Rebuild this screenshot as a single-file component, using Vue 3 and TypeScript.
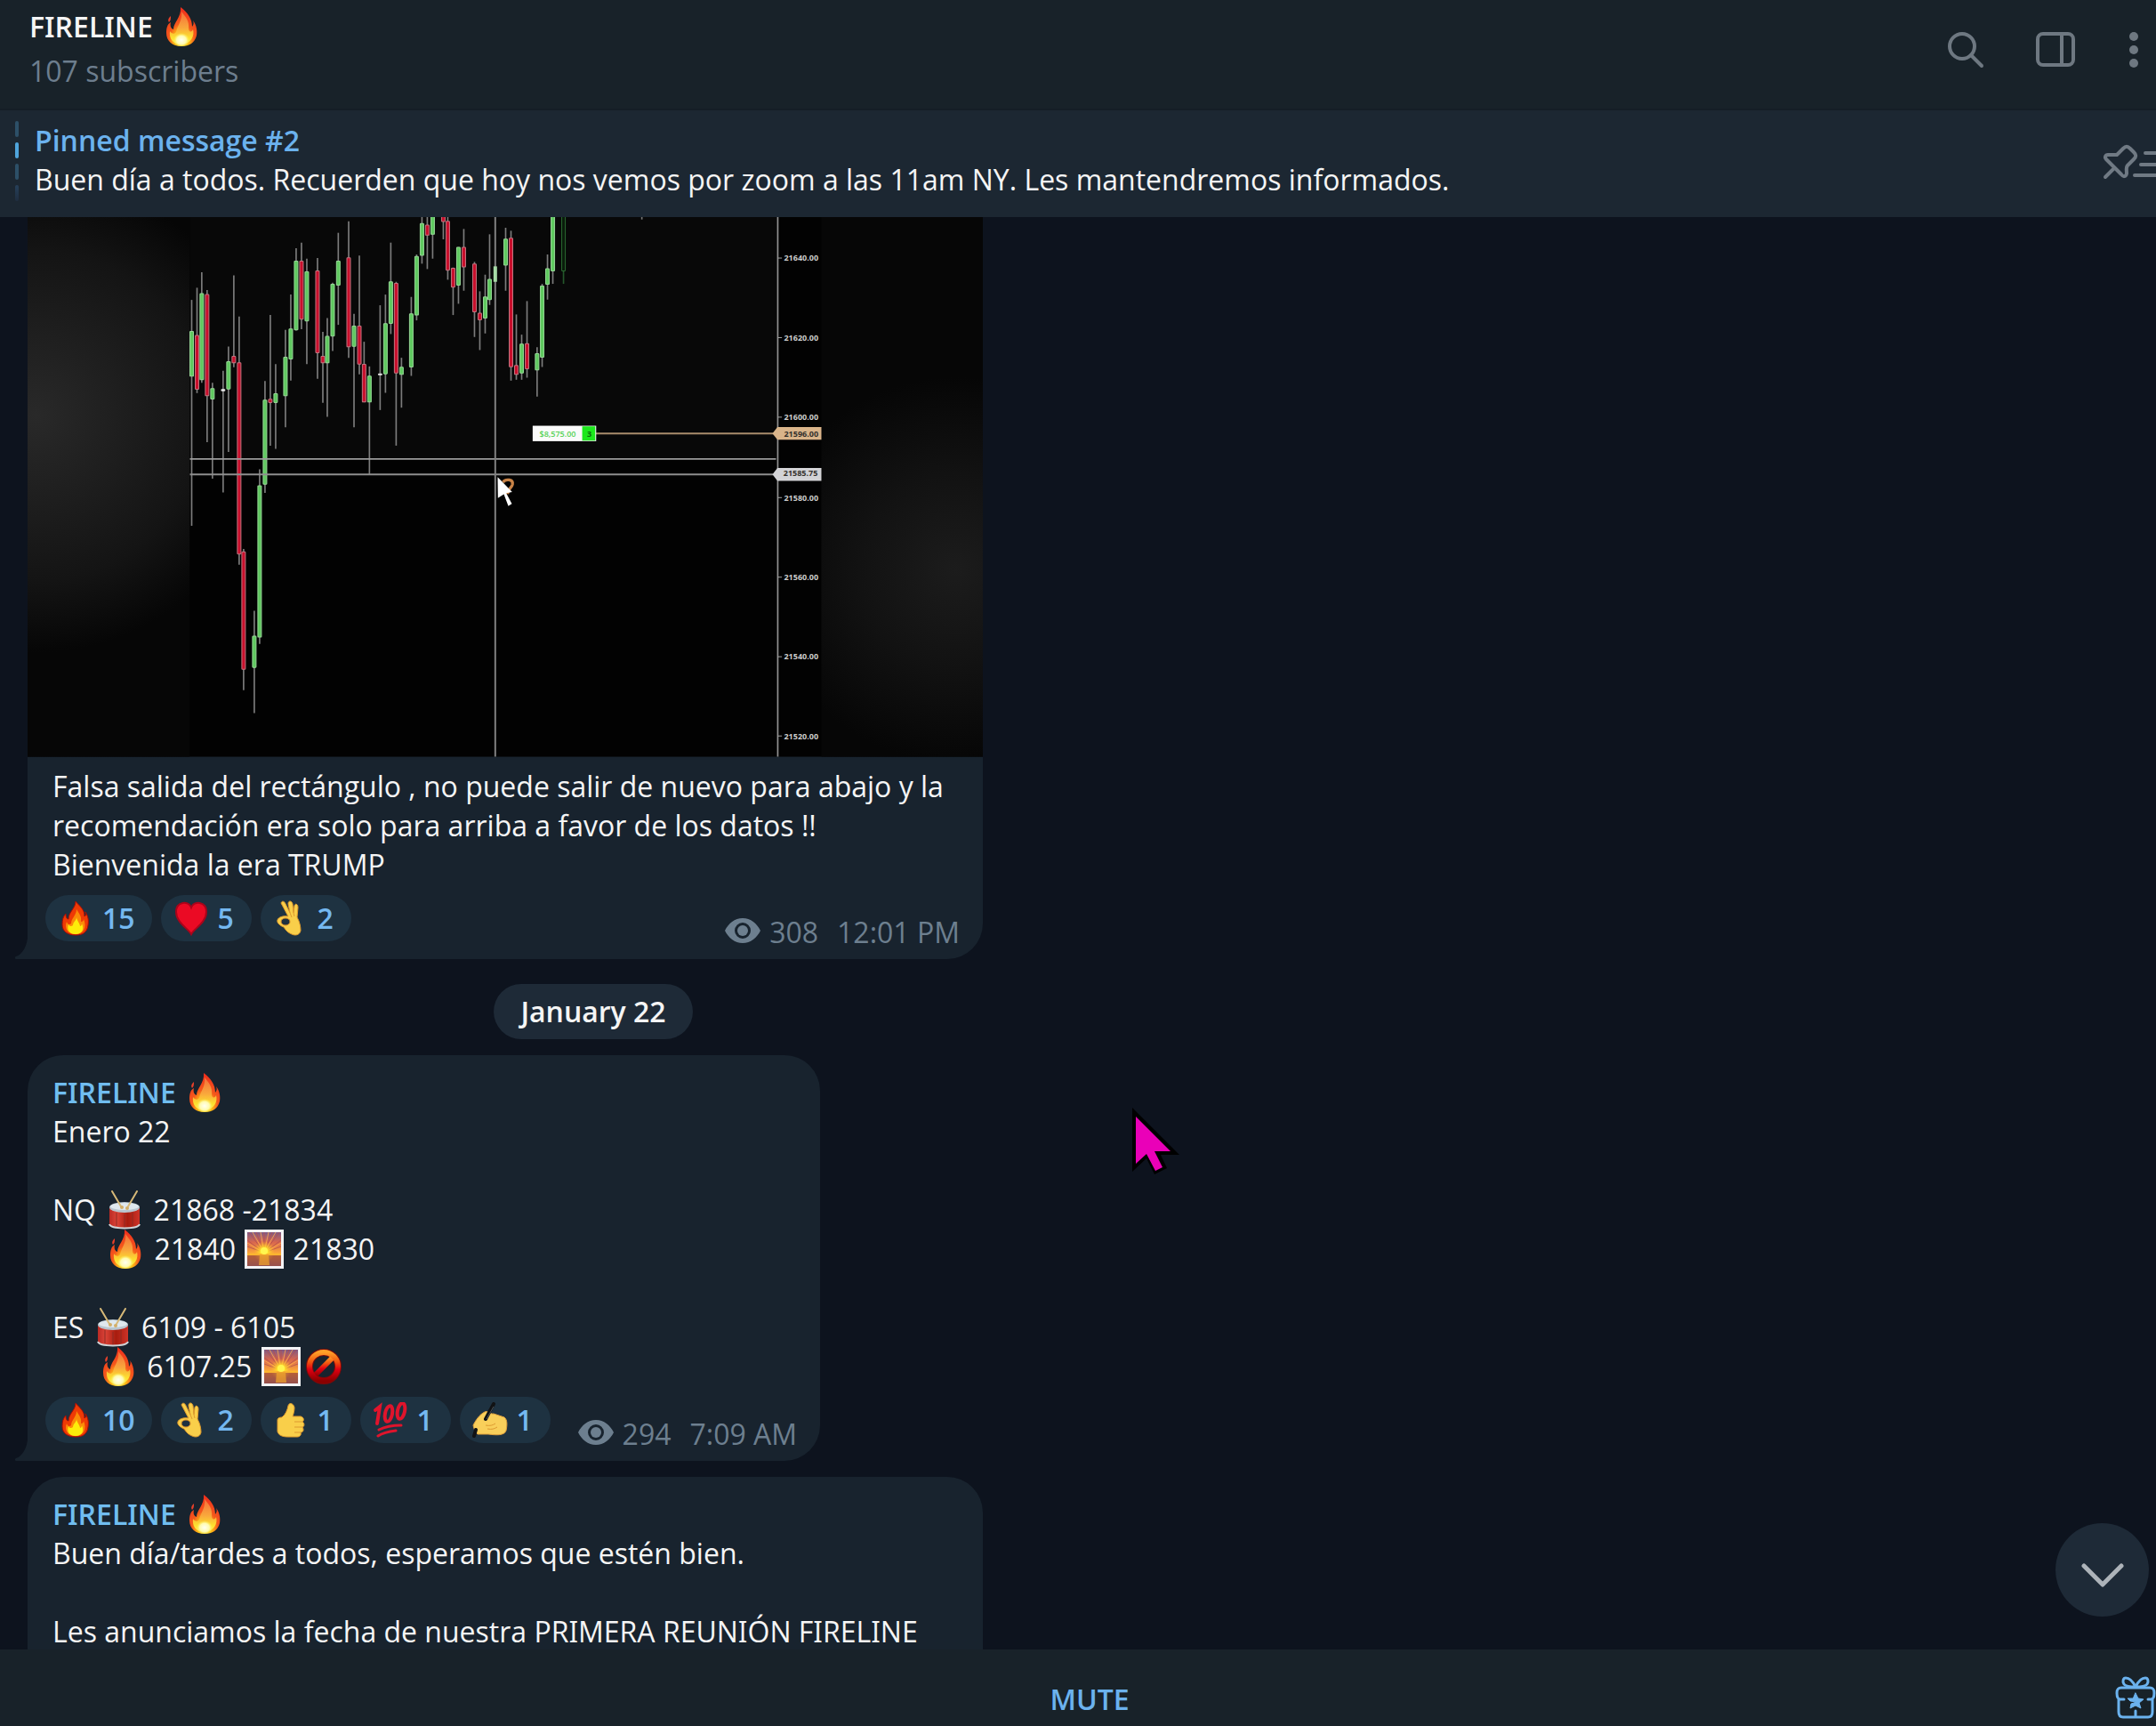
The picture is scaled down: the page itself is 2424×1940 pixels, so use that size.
<script setup lang="ts">
interface Reaction {
  emoji: string
  count: number
}
type Piece = { text?: string; emoji?: string }
type Candle = [x: number, high: number, low: number, top: number, bottom: number, kind: string]

const emojiPattern = /:(\w+):/

function pieces(line: string): Piece[] {
  return line
    .split(emojiPattern)
    .map((part, i) => (i % 2 ? { emoji: part } : { text: part }))
    .filter((p) => p.emoji || p.text)
}

const caption =
  'Falsa salida del rectángulo , no puede salir de nuevo para abajo y la recomendación era solo para arriba a favor de los datos !!\nBienvenida la era TRUMP'

const levels: string[] = [
  'Enero 22',
  '',
  'NQ :drum: 21868 -21834',
  '       :fire: 21840 :sunrise: 21830',
  '',
  'ES :drum: 6109 - 6105',
  '      :fire: 6107.25 :sunrise::ban:',
]

const announcement: string[] = [
  'Buen día/tardes a todos, esperamos que estén bien.',
  '',
  'Les anunciamos la fecha de nuestra PRIMERA REUNIÓN FIRELINE',
]

const firstReactions: Reaction[] = [
  { emoji: 'flame', count: 15 },
  { emoji: 'heart', count: 5 },
  { emoji: 'ok', count: 2 },
]
const secondReactions: Reaction[] = [
  { emoji: 'flame', count: 10 },
  { emoji: 'ok', count: 2 },
  { emoji: 'thumb', count: 1 },
  { emoji: 'hundred', count: 1 },
  { emoji: 'writing', count: 1 },
]

const candles: Candle[] = [
  [46, 291, 1052, 397, 548, 'up'],
  [64, 250, 605, 411, 592, 'down'],
  [80, 198, 570, 270, 560, 'up'],
  [98, 258, 770, 273, 614, 'down'],
  [116, 570, 893, 590, 625, 'up'],
  [152, 530, 940, 593, 597, 'flat'],
  [170, 448, 803, 499, 591, 'up'],
  [188, 208, 518, 481, 503, 'down'],
  [206, 347, 1183, 503, 1147, 'down'],
  [221, 1130, 1606, 1140, 1535, 'down'],
  [257, 1338, 1683, 1424, 1529, 'up'],
  [275, 862, 1450, 917, 1427, 'up'],
  [293, 564, 941, 629, 912, 'up'],
  [311, 342, 782, 626, 637, 'down'],
  [329, 507, 793, 607, 637, 'up'],
  [362, 392, 720, 484, 614, 'up'],
  [380, 273, 563, 389, 490, 'up'],
  [398, 117, 394, 160, 392, 'up'],
  [416, 98, 390, 160, 356, 'down'],
  [434, 152, 507, 196, 362, 'up'],
  [470, 150, 557, 193, 469, 'down'],
  [488, 399, 638, 481, 503, 'down'],
  [503, 352, 685, 414, 503, 'up'],
  [521, 233, 463, 238, 413, 'up'],
  [540, 65, 375, 160, 241, 'up'],
  [575, 26, 486, 149, 449, 'down'],
  [593, 338, 720, 379, 447, 'up'],
  [611, 142, 542, 379, 507, 'down'],
  [627, 432, 636, 508, 635, 'down'],
  [645, 515, 878, 548, 635, 'up'],
  [681, 309, 662, 540, 543, 'flat'],
  [699, 273, 604, 371, 540, 'up'],
  [717, 98, 406, 230, 370, 'up'],
  [735, 230, 782, 235, 537, 'down'],
  [753, 486, 654, 518, 542, 'up'],
  [786, 281, 547, 338, 517, 'up'],
  [804, 138, 360, 145, 342, 'up'],
  [822, 0, 169, 34, 141, 'up'],
  [840, 0, 187, 39, 73, 'down'],
  [858, 0, 152, 0, 70, 'up'],
  [894, 0, 87, 0, 27, 'down'],
  [909, 0, 223, 26, 191, 'down'],
  [927, 182, 342, 184, 248, 'down'],
  [945, 113, 304, 114, 241, 'up'],
  [963, 52, 260, 114, 180, 'down'],
  [999, 163, 416, 170, 331, 'down'],
  [1017, 262, 460, 336, 358, 'down'],
  [1035, 206, 404, 281, 352, 'up'],
  [1050, 70, 308, 222, 290, 'up'],
  [1104, 48, 260, 86, 174, 'up'],
  [1122, 58, 563, 83, 516, 'down'],
  [1140, 340, 560, 512, 542, 'down'],
  [1158, 408, 560, 440, 537, 'up'],
  [1176, 295, 553, 438, 523, 'down'],
  [1210, 450, 617, 472, 527, 'up'],
  [1227, 237, 517, 244, 484, 'up'],
  [1245, 138, 290, 186, 238, 'up'],
  [1263, 0, 237, 0, 193, 'up'],
  [1299, 0, 237, 0, 193, 'live'],
]

const ticks: { y: number; label: string }[] = [
  { y: 150, label: '21640.00' },
  { y: 418, label: '21620.00' },
  { y: 686, label: '21600.00' },
  { y: 957, label: '21580.00' },
  { y: 1225, label: '21560.00' },
  { y: 1493, label: '21540.00' },
  { y: 1760, label: '21520.00' },
]
</script>

<template>
  <div class="app">
    <svg class="defs" width="0" height="0" aria-hidden="true">
      <defs>
        <radialGradient id="fireOuter" cx="0.5" cy="0.85" r="0.85">
          <stop offset="0" stop-color="#fdf21a" />
          <stop offset="0.3" stop-color="#fdb515" />
          <stop offset="0.5" stop-color="#f4591c" />
          <stop offset="1" stop-color="#ee2a1c" />
        </radialGradient>
        <linearGradient id="fireMid" x1="0" y1="0" x2="0" y2="1">
          <stop offset="0" stop-color="#f46e3a" />
          <stop offset="0.5" stop-color="#f9a83c" />
          <stop offset="0.8" stop-color="#fde12f" />
          <stop offset="1" stop-color="#fdf05a" />
        </linearGradient>
        <radialGradient id="fireCore">
          <stop offset="0" stop-color="#fffff0" />
          <stop offset="0.6" stop-color="#fffbb0" />
          <stop offset="1" stop-color="#fdf05a" stop-opacity="0" />
        </radialGradient>
        <linearGradient id="drumSide">
          <stop offset="0" stop-color="#b92a24" />
          <stop offset="0.25" stop-color="#dc4438" />
          <stop offset="0.6" stop-color="#a81c0e" />
          <stop offset="1" stop-color="#cc3328" />
        </linearGradient>
        <linearGradient id="sky" x1="0" y1="0" x2="0" y2="1">
          <stop offset="0" stop-color="#7d5a86" />
          <stop offset="0.3" stop-color="#d9674e" />
          <stop offset="0.6" stop-color="#f9a23a" />
          <stop offset="0.66" stop-color="#fbc02f" />
          <stop offset="0.7" stop-color="#c5702f" />
          <stop offset="1" stop-color="#7c5264" />
        </linearGradient>
        <radialGradient id="sunGlow">
          <stop offset="0" stop-color="#ffff70" />
          <stop offset="0.35" stop-color="#ffe02a" />
          <stop offset="1" stop-color="#ffb030" stop-opacity="0" />
        </radialGradient>
        <linearGradient id="banRing" x1="0" y1="0" x2="0" y2="1">
          <stop offset="0" stop-color="#ffa028" />
          <stop offset="0.35" stop-color="#f0500f" />
          <stop offset="0.6" stop-color="#e00012" />
          <stop offset="1" stop-color="#8a0000" />
        </linearGradient>
        <radialGradient id="blurLeft" cx="-480" cy="680" r="800" gradientUnits="userSpaceOnUse">
          <stop offset="0" stop-color="#292929" />
          <stop offset="0.3" stop-color="#202020" />
          <stop offset="0.7" stop-color="#141414" />
          <stop offset="1" stop-color="#060606" />
        </radialGradient>
        <radialGradient id="blurRight" cx="2620" cy="1200" r="650" gradientUnits="userSpaceOnUse">
          <stop offset="0" stop-color="#1c1c1c" />
          <stop offset="0.5" stop-color="#121212" />
          <stop offset="1" stop-color="#060606" />
        </radialGradient>
      </defs>

      <symbol id="fire" viewBox="0 0 44 44">
        <path fill="url(#fireOuter)" d="M21 0C29 6 34 13 34 22C36 20 36 17 35 15C39 20 40 27 39 32C37 40 31 44 22 44C12 44 5 38 5 29C5 24 6 19 10 17C9 21 10 24 13 25C13 17 22 12 21 0Z" />
        <path fill="#e8402a" d="M10 10C8 12 6 14 8 17C10 15 10 13 10 10Z" />
        <path fill="url(#fireMid)" d="M22 5C27 11 31 16 30 24C30 28 33 29 35 25C37 32 33 41 22 42C12 42 8 35 9 27C11 30 14 31 16 28C18 19 23 16 22 5Z" />
        <ellipse cx="22" cy="37" rx="9" ry="8" fill="url(#fireCore)" />
      </symbol>

      <symbol id="drum" viewBox="0 0 44 44">
        <path fill="url(#drumSide)" d="M5 20V38C6 44 38 44 39 38V20Z" />
        <path d="M13 25V40M31 25V40M22 27V42" stroke="#8c2a22" stroke-width="1" />
        <path d="M5 38C7 44 37 44 39 38" fill="none" stroke="#cfd3d6" stroke-width="2" />
        <ellipse cx="22" cy="19" rx="17" ry="6" fill="#b9c6cf" />
        <ellipse cx="22" cy="18" rx="16" ry="4" fill="#dfe8ee" />
        <path d="M8 1L18 18M36 1L26 18" stroke="#d7b978" stroke-width="2" stroke-linecap="round" />
        <circle cx="19" cy="19" r="2" fill="#d2ae68" />
        <circle cx="25" cy="20" r="2" fill="#d2ae68" />
      </symbol>

      <symbol id="sunrise" viewBox="0 0 44 44">
        <rect x="0" y="0" width="44" height="44" fill="#f4f4f6" />
        <rect x="3" y="3" width="38" height="38" fill="url(#sky)" />
        <path d="M22 26L5 3M22 26L13 3M22 26L22 3M22 26L31 3M22 26L39 3M22 26L3 12M22 26L41 12M22 26L3 19M22 26L41 19" stroke="#b4504f" stroke-width="1" opacity="0.8" />
        <path d="M22 26L9 3M22 26L18 3M22 26L27 3M22 26L35 3M22 26L3 15M22 26L41 15" stroke="#ffad50" stroke-width="1" opacity="0.8" />
        <circle cx="22" cy="25" r="12" fill="url(#sunGlow)" />
        <path d="M3 28H41V41H3Z" fill="#a8513f" opacity="0.6" />
        <path d="M3 28H41" stroke="#fbb52f" stroke-width="2" />
        <path d="M17 28H27L28 40H16Z" fill="#eda02c" opacity="0.75" />
        <circle cx="22" cy="24" r="4" fill="#fff64f" />
      </symbol>

      <symbol id="ban" viewBox="0 0 44 44">
        <circle cx="22" cy="22" r="16" fill="none" stroke="#7a0a0a" stroke-width="8" />
        <path d="M33 11L11 33" stroke="url(#banRing)" stroke-width="6" />
        <circle cx="22" cy="22" r="16" fill="none" stroke="url(#banRing)" stroke-width="6" />
      </symbol>

      <symbol id="flame" viewBox="0 0 40 40">
        <path fill="#ee3a05" stroke="#a80d05" stroke-width="1" d="M20 1C25 7 30 10 30 18C32 17 32 15 31 13C34 18 35 22 34 28C33 36 28 39 20 39C11 39 5 35 5 27C5 22 6 18 9 15C9 19 10 21 12 21C12 13 20 9 20 1Z" />
        <path fill="#fb8a08" d="M21 10C24 15 27 18 26 24C28 24 29 23 29 21C33 30 29 38 20 38C11 38 7 31 10 24C11 27 13 28 15 26C15 20 21 17 21 10Z" />
        <path fill="#fdec0a" d="M21 19C22 24 25 26 25 29C26 29 27 28 27 26C30 33 27 38 20 38C12 38 10 32 12 27C13 29 15 30 17 28C17 24 21 23 21 19Z" />
      </symbol>

      <symbol id="heart" viewBox="0 0 40 40">
        <path fill="#eb0a24" stroke="#a9041a" stroke-width="2" d="M20 38C17 32 3 25 3 13C3 1 17 0 20 8C23 0 37 1 37 13C37 25 23 32 20 38Z" />
      </symbol>

      <symbol id="ok" viewBox="0 0 40 40">
        <path fill="#f9cf4a" stroke="#e09a2c" stroke-width="1" d="M9 3C10 0 13 1 14 4L19 14L17 4C17 0 21 0 22 4L23 14L24 6C25 3 28 4 28 8L27 19C30 24 31 30 31 34C30 39 25 40 21 38C16 36 14 33 12 30C7 28 4 25 5 22C6 19 11 17 17 18Z" />
        <ellipse cx="14" cy="24" rx="5" ry="4" fill="#1f3140" stroke="#d88c28" stroke-width="1" />
        <path d="M19 14L21 19M23 14L24 18" stroke="#dd9a30" fill="none" />
      </symbol>

      <symbol id="thumb" viewBox="0 0 40 40">
        <path fill="#f9cf4a" stroke="#e09a2c" stroke-width="1" d="M5 20C5 18 7 17 10 17C14 14 16 9 17 4C18 0 23 1 24 6C24 10 23 13 22 16H31C35 17 35 21 33 22C36 24 35 28 33 28C35 31 34 34 31 34C32 37 30 39 27 39H17C10 39 6 37 5 33Z" />
        <path d="M24 22H33M24 28H33M24 34H31" stroke="#dd9a30" fill="none" />
      </symbol>

      <symbol id="hundred" viewBox="0 0 40 40">
        <g fill="none" stroke="#e0142c" stroke-linecap="round">
          <path stroke-width="4" d="M3 9L8 5L5 24" />
          <ellipse cx="18" cy="13" rx="4" ry="9" transform="rotate(12 18 13)" stroke-width="4" />
          <ellipse cx="32" cy="10" rx="4" ry="9" transform="rotate(12 32 10)" stroke-width="4" />
          <path stroke-width="3" d="M7 31C15 27 24 26 32 26M6 38C12 34 18 33 26 32" />
        </g>
      </symbol>

      <symbol id="writing" viewBox="0 0 40 40">
        <path fill="#f9cf5a" stroke="#e0a03c" stroke-width="1" d="M1 26C4 20 8 14 14 11C18 9 21 14 24 13L36 17C40 20 39 27 38 32C36 38 26 37 18 36L6 36C3 34 2 30 1 26Z" />
        <path d="M15 26C20 27 23 26 26 24M17 30C22 31 25 30 28 28" stroke="#dd9a30" fill="none" />
        <path d="M24 2L15 19M4 31L2 38" stroke="#111214" stroke-width="4" stroke-linecap="round" fill="none" />
        <path d="M24 5L16 19" stroke="#4c5157" stroke-width="1" />
      </symbol>

      <symbol id="eye" viewBox="0 0 40 28">
        <path fill="currentColor" fill-rule="evenodd" d="M20 0C29 0 36 6 40 14C36 22 29 28 20 28C11 28 4 22 0 14C4 6 11 0 20 0ZM20 5A9 9 0 1 0 20 23A9 9 0 1 0 20 5Z" />
        <circle cx="20" cy="14" r="6" fill="currentColor" />
      </symbol>

      <symbol id="tail" viewBox="0 0 14 24">
        <path fill="currentColor" d="M14 0C13 10 8 19 1 21C-1 22 0 24 1 24H14Z" />
      </symbol>
    </svg>

    <header class="top">
      <div class="peer">
        <h1 class="title">FIRELINE <svg class="emoji"><use href="#fire" /></svg></h1>
        <p class="status">107 subscribers</p>
      </div>
      <nav class="tools">
        <button type="button" aria-label="Search">
          <svg width="42" height="42" viewBox="0 0 42 42" fill="none" stroke="currentColor" stroke-width="4" stroke-linecap="round">
            <circle cx="17" cy="17" r="14" /><path d="M27 27L39 39" />
          </svg>
        </button>
        <button type="button" aria-label="Channel info">
          <svg width="44" height="42" viewBox="0 0 44 42" fill="none" stroke="currentColor" stroke-width="4">
            <rect x="2" y="3" width="40" height="35" rx="6" /><path d="M29 3V38" />
          </svg>
        </button>
        <button type="button" aria-label="More">
          <svg width="10" height="42" viewBox="0 0 10 42" fill="currentColor">
            <circle cx="5" cy="6" r="5" /><circle cx="5" cy="21" r="5" /><circle cx="5" cy="36" r="5" />
          </svg>
        </button>
      </nav>
    </header>

    <section class="pinned">
      <div class="marks"><i /><i class="on" /><i /><i class="dim" /></div>
      <div class="pinned-body">
        <h2>Pinned message #2</h2>
        <p>Buen día a todos. Recuerden que hoy nos vemos por zoom a las 11am NY. Les mantendremos informados.</p>
      </div>
      <button type="button" class="pin" aria-label="Pinned messages">
        <svg width="72" height="40" viewBox="0 0 72 40" fill="none" stroke="currentColor" stroke-width="4" stroke-linecap="round" stroke-linejoin="round">
          <path d="M3 37L13 27M16 12L23 5C26 2 28 2 31 5L35 9C38 12 38 14 35 17L28 24C26 26 27 29 27 33C26 37 23 37 21 34L4 17C2 15 3 12 6 12Z" />
          <path d="M48 10H70M43 23H70M36 35H70" />
        </svg>
      </button>
    </section>

    <main class="history">
      <div class="column">
        <article class="bubble wide photo">
          <svg class="chart" viewBox="-507 12 3219 1818" role="img" aria-label="Price chart">
            <rect x="-507" y="12" width="3219" height="1818" fill="#020202" />
            <rect x="-507" y="12" width="546" height="1818" fill="url(#blurLeft)" />
            <rect x="2168" y="12" width="544" height="1818" fill="url(#blurRight)" />
            <rect x="39" y="12" width="1982" height="815" fill="#080808" />
            <g v-for="c in candles" :key="c[0]" :class="['candle', c[5]]">
              <path :d="`M${c[0]} ${c[1]}V${c[2]}`" />
              <rect :x="c[0] - 6" :y="c[3]" width="12" :height="c[4] - c[3]" rx="2" />
            </g>
            <path d="M1563 12V20" stroke="#777" stroke-width="5" />
            <path d="M40 827H2015" stroke="#9b9b9b" stroke-width="5" />
            <path d="M40 879H2005" stroke="#8e8e8e" stroke-width="6" />
            <path d="M1069 12V1830" stroke="#808080" stroke-width="6" />
            <rect x="1063" y="178" width="12" height="52" fill="#a6dba6" />
            <path d="M2021 12V1830" stroke="#929292" stroke-width="5" />
            <g v-for="t in ticks" :key="t.y">
              <path :d="`M2021 ${t.y}h14`" stroke="#a0a0a0" stroke-width="3" />
              <text x="2042" :y="t.y + 10" class="axis">{{ t.label }}</text>
            </g>
            <path d="M1408 741H2010" stroke="#a98d6c" stroke-width="6" />
            <rect x="1195" y="715" width="214" height="52" fill="#fafafa" />
            <rect x="1362" y="717" width="44" height="48" fill="#1ce81c" />
            <text x="1218" y="751" class="axis profit">$8,575.00</text>
            <text x="1378" y="751" class="axis qty">3</text>
            <path d="M2003 741L2020 719H2168V762H2020Z" fill="#d9b48a" />
            <path d="M2003 879L2020 857H2168V901H2020Z" fill="#d3d3d6" />
            <text x="2042" y="751" class="axis dark">21596.00</text>
            <text x="2040" y="885" class="axis dark">21585.75</text>
            <path d="M1095 905C1105 892 1130 896 1127 912C1124 926 1112 925 1110 945" fill="none" stroke="#c98347" stroke-width="10" />
            <path d="M1077 888L1126 938L1106 942L1125 978L1113 985L1098 946L1078 958Z" fill="#fff" />
          </svg>
          <p class="text">{{ caption }}</p>
          <footer class="info">
            <div class="reactions">
              <button v-for="r in firstReactions" :key="r.emoji" type="button" class="reaction">
                <svg><use :href="'#' + r.emoji" /></svg><span>{{ r.count }}</span>
              </button>
            </div>
            <div class="meta">
              <svg><use href="#eye" /></svg><span>308</span><time>12:01 PM</time>
            </div>
          </footer>
          <svg class="tail"><use href="#tail" /></svg>
        </article>

        <div class="date">January 22</div>

        <article class="bubble">
          <h3 class="name">FIRELINE <svg class="emoji"><use href="#fire" /></svg></h3>
          <p v-for="(line, i) in levels" :key="i" class="text"><template v-for="(p, j) in pieces(line)" :key="j"><svg v-if="p.emoji" class="emoji"><use :href="'#' + p.emoji" /></svg><template v-else>{{ p.text }}</template></template></p>
          <footer class="info">
            <div class="reactions">
              <button v-for="r in secondReactions" :key="r.emoji" type="button" class="reaction">
                <svg><use :href="'#' + r.emoji" /></svg><span>{{ r.count }}</span>
              </button>
            </div>
            <div class="meta">
              <svg><use href="#eye" /></svg><span>294</span><time>7:09 AM</time>
            </div>
          </footer>
          <svg class="tail"><use href="#tail" /></svg>
        </article>

        <article class="bubble wide long">
          <h3 class="name">FIRELINE <svg class="emoji"><use href="#fire" /></svg></h3>
          <p v-for="(line, i) in announcement" :key="i" class="text">{{ line }}</p>
        </article>
      </div>

      <button type="button" class="jump" aria-label="Scroll to bottom">
        <svg width="48" height="28" viewBox="0 0 48 28" fill="none" stroke="currentColor" stroke-width="5" stroke-linecap="round" stroke-linejoin="round">
          <path d="M3 4L24 25L45 4" />
        </svg>
      </button>
    </main>

    <div class="bottom">
      <button type="button" class="mute">MUTE</button>
      <button type="button" class="gift" aria-label="Send a gift">
        <svg width="46" height="48" viewBox="0 0 46 48" fill="none" stroke="currentColor" stroke-width="3" stroke-linecap="round" stroke-linejoin="round">
          <path d="M10 26H6C3 26 2 23 2 19C2 15 3 13 7 13H39C43 13 44 15 44 19C44 23 43 26 40 26H37M4 26V40C4 44 6 46 9 46H37C40 46 42 44 42 40V26M23 39V46" />
          <path d="M23 12C21 8 17 2 12 2C9 2 8 6 10 9C12 12 18 12 23 12C28 12 34 12 36 9C38 6 37 2 34 2C29 2 25 8 23 12" />
          <path fill="currentColor" stroke-width="1" d="M23 19L26 25L32 26L27 30L29 36L23 33L17 36L18 31L24 29L17 28L14 25L20 25Z" />
        </svg>
      </button>
    </div>

    <svg class="cursor" width="56" height="76" viewBox="0 0 56 76" aria-hidden="true">
      <path fill="#000" d="M0 0L53 53H32L39 68L25 75L16 57L0 72Z" />
      <path fill="#ea00b8" d="M4 10L43 49H25L34 67L26 71L16 52L4 63Z" />
    </svg>
  </div>
</template>

<style>
body {
  background: #0d131e;
}
</style>

<style scoped>
.app {
  position: relative;
  display: flex;
  flex-direction: column;
  height: 100vh;
  overflow: hidden;
  background: #0d131e;
  color: #f5f5f5;
  font: 400 32px/44px 'Open Sans', 'Noto Sans', sans-serif;
}
.defs {
  position: absolute;
}
h1,
h2,
h3,
p {
  margin: 0;
  font-size: 32px;
  line-height: 44px;
}
h1,
h2,
h3 {
  font-weight: 600;
}
/* Capital I with serifs */
.title,
.name,
.long {
  font-feature-settings: 'ss01';
}
button {
  display: flex;
  align-items: center;
  margin: 0;
  padding: 0;
  border: 0;
  background: none;
  color: inherit;
  font: inherit;
}
.emoji {
  width: 44px;
  height: 44px;
  margin: 0 2px;
  vertical-align: top;
}
.top {
  display: flex;
  flex: none;
  justify-content: space-between;
  align-items: flex-start;
  height: 124px;
  box-sizing: border-box;
  padding: 8px 20px 0 33px;
  border-bottom: 2px solid #151e26;
  background: #182229;
}
.status {
  margin-top: 6px;
  color: #6d7e8e;
}
.tools {
  display: flex;
  gap: 58px;
  padding-top: 27px;
  color: #6e7881;
}
.tools button:last-child {
  margin-left: 3px;
}
.pinned {
  display: flex;
  flex: none;
  align-items: flex-start;
  padding: 12px 0 18px 17px;
  background: #1c2732;
}
.marks {
  display: flex;
  flex: none;
  flex-direction: column;
  gap: 6px;
  width: 4px;
  margin-right: 18px;
}
.marks i {
  height: 18px;
  border-radius: 2px;
  background: #2d5068;
}
.marks .on {
  background: #4fa5dc;
}
.marks .dim {
  background: linear-gradient(#26405a, #1f2d3f);
}
.pinned-body {
  flex: 1;
}
.pinned h2 {
  color: #6bb2ee;
}
.pin {
  flex: none;
  margin: 26px -12px 0 0;
  color: #707a84;
}
.history {
  position: relative;
  flex: 1;
  min-height: 0;
  overflow: hidden;
}
.column {
  display: flex;
  flex-direction: column;
  align-items: flex-start;
  max-width: 1272px;
  padding: 0 31px;
}
.bubble {
  position: relative;
  box-sizing: border-box;
  margin-bottom: 18px;
  padding-top: 20px;
  border-radius: 40px 40px 40px 0;
  background: #18232e;
}
.wide {
  width: 100%;
  max-width: 1074px;
}
.long {
  padding-bottom: 60px;
}
.photo {
  margin-bottom: 28px;
  padding-top: 0;
  border-top-left-radius: 0;
  border-top-right-radius: 0;
}
.chart {
  display: block;
  width: 100%;
  margin-bottom: 11px;
}
.candle path {
  stroke: #7c7c7c;
  stroke-width: 5;
}
.candle rect {
  stroke-width: 3;
}
.up rect {
  fill: #5fc95f;
  stroke: #96d696;
}
.down rect {
  fill: #c90f2c;
  stroke: #c27580;
}
.flat rect {
  fill: #fff;
  stroke: #ddd;
}
.live path {
  stroke: #24572a;
}
.live rect {
  fill: #0a1a0b;
  stroke: #2a6a30;
}
.axis {
  fill: #cccccc;
  font-size: 27px;
  font-weight: 700;
}
.dark {
  fill: #33302c;
}
.profit {
  fill: #55d255;
  font-weight: 600;
}
.qty {
  fill: #0c6a0c;
}
.name {
  padding: 0 28px;
  color: #70bdf0;
}
.text {
  min-height: 44px;
  padding: 0 28px;
  white-space: pre-wrap;
}
.info {
  display: flex;
  justify-content: space-between;
  align-items: flex-end;
  gap: 31px;
  padding: 12px 26px 8px 20px;
}
.reactions {
  display: flex;
  gap: 10px;
  margin-bottom: 12px;
}
.reaction {
  gap: 10px;
  min-width: 102px;
  height: 52px;
  padding: 0 19px 0 14px;
  border-radius: 26px;
  background: #1e3241;
  color: #74b8f0;
  font-weight: 600;
}
.reaction svg {
  width: 40px;
  height: 40px;
}
.meta {
  display: flex;
  align-items: center;
  color: #6d7f8f;
}
.meta svg {
  width: 40px;
  height: 28px;
  margin: 0 10px 4px 0;
}
.meta time {
  margin-left: 21px;
}
.tail {
  position: absolute;
  bottom: 0;
  left: -14px;
  width: 14px;
  height: 24px;
  color: #18232e;
}
.date {
  align-self: center;
  margin-bottom: 18px;
  padding: 9px 30px;
  border-radius: 31px;
  background: #1e2a37;
  font-weight: 600;
}
.jump {
  position: absolute;
  right: 8px;
  bottom: 37px;
  justify-content: center;
  width: 105px;
  height: 105px;
  padding-top: 10px;
  border-radius: 50%;
  background: #1e2a37;
  color: #adb3b9;
}
.bottom {
  display: flex;
  flex: none;
  align-items: flex-start;
  padding: 30px 0 8px 72px;
  background: #182229;
}
.mute {
  flex: 1;
  justify-content: center;
  padding-top: 4px;
  color: #6bb2ee;
  font-weight: 600;
}
.gift {
  flex: none;
  color: #6bb2ee;
}
.cursor {
  position: absolute;
  top: 1245px;
  left: 1273px;
}
</style>
